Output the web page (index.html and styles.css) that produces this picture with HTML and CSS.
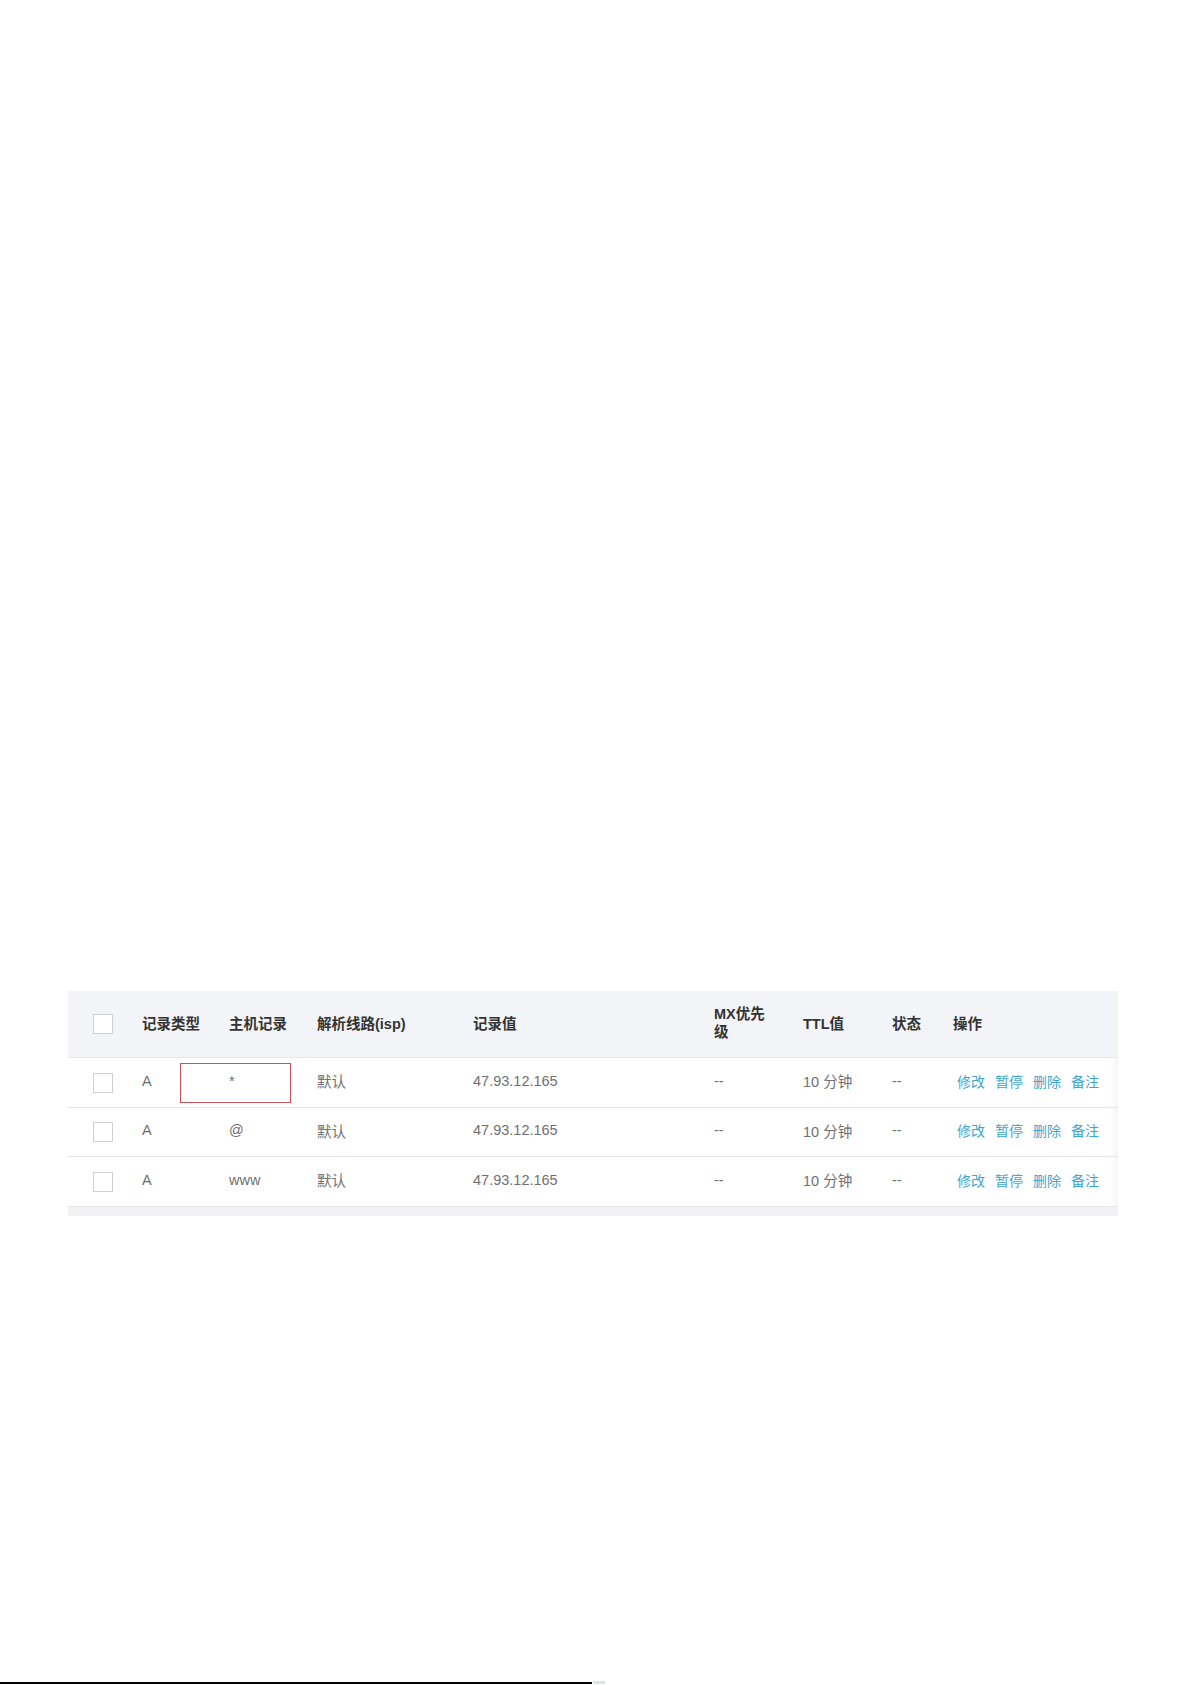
FILE: index.html
```html
<!DOCTYPE html>
<html lang="zh-CN">
<head>
<meta charset="utf-8">
<title>解析记录</title>
<link rel="stylesheet" href="styles.css">
</head>
<body>
<div class="page">
  <div class="table">
    <div class="row head">
      <div class="cell c-chk"><span class="box"></span></div>
      <div class="cell">记录类型</div>
      <div class="cell">主机记录</div>
      <div class="cell">解析线路(isp)</div>
      <div class="cell">记录值</div>
      <div class="cell"><span class="mx">MX优先级</span></div>
      <div class="cell">TTL值</div>
      <div class="cell">状态</div>
      <div class="cell">操作</div>
    </div>
    <div class="row">
      <div class="cell c-chk"><span class="box"></span></div>
      <div class="cell">A</div>
      <div class="cell star">*</div>
      <div class="cell">默认</div>
      <div class="cell">47.93.12.165</div>
      <div class="cell">--</div>
      <div class="cell">10 分钟</div>
      <div class="cell">--</div>
      <div class="cell ops"><a>修改</a><a>暂停</a><a>删除</a><a>备注</a></div>
    </div>
    <div class="row">
      <div class="cell c-chk"><span class="box"></span></div>
      <div class="cell">A</div>
      <div class="cell">@</div>
      <div class="cell">默认</div>
      <div class="cell">47.93.12.165</div>
      <div class="cell">--</div>
      <div class="cell">10 分钟</div>
      <div class="cell">--</div>
      <div class="cell ops"><a>修改</a><a>暂停</a><a>删除</a><a>备注</a></div>
    </div>
    <div class="row">
      <div class="cell c-chk"><span class="box"></span></div>
      <div class="cell">A</div>
      <div class="cell">www</div>
      <div class="cell">默认</div>
      <div class="cell">47.93.12.165</div>
      <div class="cell">--</div>
      <div class="cell">10 分钟</div>
      <div class="cell">--</div>
      <div class="cell ops"><a>修改</a><a>暂停</a><a>删除</a><a>备注</a></div>
    </div>
    <div class="foot"></div>
    <div class="mark"></div>
  </div>
  <div class="rule"><span class="rule-line"></span><span class="rule-end"></span></div>
</div>
</body>
</html>
```
FILE: styles.css
```css
html, body {
  margin: 0;
  padding: 0;
  background: #fff;
}
.page {
  height: 1685px;
  overflow: hidden;
  display: flex;
  flex-direction: column;
  font-family: "Liberation Sans", Arial, "Noto Sans CJK SC", sans-serif;
}
.table {
  position: relative;
  margin: 991px 0 0 68px;
  width: 1050px;
  background: #fff;
}
.row {
  display: grid;
  grid-template-columns: 74px 87px 88px 156px 241px 89px 89px 61px 1fr;
  align-items: center;
  box-sizing: border-box;
  height: 49.5px;
  padding-bottom: 3px;
  border-bottom: 1px solid #e6e7ea;
  font-size: 14.5px;
  color: #707070;
  box-shadow: inset -8px 0 8px -6px rgba(0,0,0,0.06);
}
.row.head {
  height: 67px;
  background: #f3f4f7;
  color: #333;
  font-weight: bold;
  font-size: 14.5px;
  box-shadow: none;
}
.cell {
  white-space: nowrap;
}
.c-chk {
  padding-left: 25px;
  display: flex;
  align-items: center;
}
.box {
  display: block;
  width: 18px;
  height: 18px;
  border: 1px solid #cfd0d3;
  background: #fff;
  margin-top: 4px;
}
.head .box {
  margin-top: 2px;
}
.mx {
  display: block;
  width: 54px;
  white-space: normal;
  line-height: 18px;
}
.star {
  padding-left: 0;
}
.ops {
  display: flex;
  gap: 10px;
  padding-left: 4px;
  font-size: 14px;
}
.ops a {
  color: #3ea6cf;
}
.foot {
  height: 9px;
  background: #f2f2f5;
}
.mark {
  position: absolute;
  left: 112px;
  top: 72px;
  width: 109px;
  height: 38px;
  border: 1px solid #d0505a;
}
.rule {
  margin-top: 466px;
  display: flex;
  align-items: flex-end;
  height: 2px;
}
.rule-line {
  width: 592px;
  height: 2px;
  background: #000;
}
.rule-end {
  width: 12px;
  height: 3px;
  margin-left: 1px;
  background: #d8e4ee;
}
```
